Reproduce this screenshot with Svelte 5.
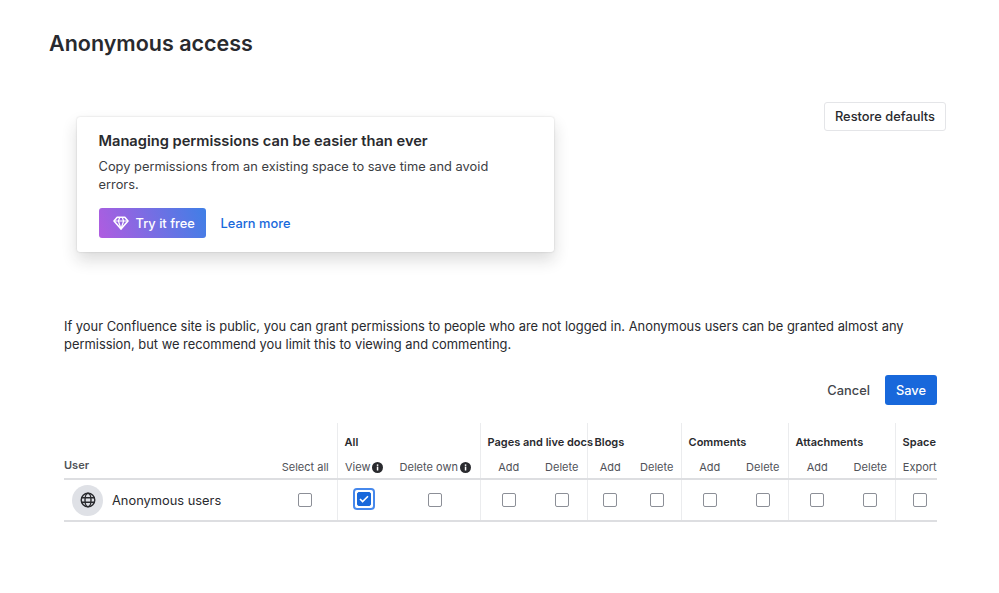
<script lang="ts">
  interface Group {
    name: string;
    perms: { label: string; info?: boolean; checked?: boolean; focus?: boolean }[];
  }

  const groups: Group[] = [
    {
      name: "All",
      perms: [
        { label: "View", info: true, checked: true, focus: true },
        { label: "Delete own", info: true },
      ],
    },
    { name: "Pages and live docs", perms: [{ label: "Add" }, { label: "Delete" }] },
    { name: "Blogs", perms: [{ label: "Add" }, { label: "Delete" }] },
    { name: "Comments", perms: [{ label: "Add" }, { label: "Delete" }] },
    { name: "Attachments", perms: [{ label: "Add" }, { label: "Delete" }] },
    { name: "Space", perms: [{ label: "Export" }] },
  ];

  const widths = [210, 63, 54, 89, 57, 50, 46, 48, 57, 50, 58, 49, 42];
</script>

<main class="page">
  <h1>Anonymous access</h1>

  <div class="top">
    <section class="promo">
      <h2>Managing permissions can be easier than ever</h2>
      <p>Copy permissions from an existing space to save time and avoid errors.</p>
      <div class="promo-actions">
        <button class="try">
          <svg width="16" height="16" viewBox="0 0 16 16" fill="none" stroke="#fff" stroke-width="1.6" stroke-linejoin="round">
            <path d="M4.2 2.2h7.6L15 6 8 14 1 6z" />
            <path d="M1 6h14M5.4 6 8 14l2.6-8M5.4 6 6.8 2.2M10.6 6 9.2 2.2" stroke-width="1.2" />
          </svg>
          Try it free
        </button>
        <span class="link">Learn more</span>
      </div>
    </section>
    <button class="restore">Restore defaults</button>
  </div>

  <div class="content">
    <p class="intro">
      If your Confluence site is public, you can grant permissions to people who are not logged in. Anonymous users can be granted almost any permission, but we recommend you limit this to viewing and commenting.
    </p>

    <div class="actions">
      <span class="cancel">Cancel</span>
      <button class="save">Save</button>
    </div>

    <table>
      <colgroup>
        {#each widths as w}<col style="width: {w}px" />{/each}
      </colgroup>
      <thead>
        <tr class="groups">
          <th class="user" rowspan="2">User</th>
          <th></th>
          {#each groups as g}
            <th class="group" colspan={g.perms.length}>{g.name}</th>
          {/each}
        </tr>
        <tr class="perms">
          <th class="perm">Select all</th>
          {#each groups as g}
            {#each g.perms as p, i}
              <th class="perm" class:start={i === 0} class:last={g.name === "Space"}>
                <span class="perm-label">
                  {p.label}
                  {#if p.info}
                    <svg width="11" height="11" viewBox="0 0 11 11">
                      <circle cx="5.5" cy="5.5" r="5.5" fill="#292a2e" />
                      <rect x="4.8" y="4.6" width="1.5" height="3.9" fill="#fff" />
                      <rect x="4.8" y="2.4" width="1.5" height="1.5" fill="#fff" />
                    </svg>
                  {/if}
                </span>
              </th>
            {/each}
          {/each}
        </tr>
      </thead>
      <tbody>
        <tr>
          <td>
            <div class="who">
              <span class="avatar">
                <svg width="16" height="16" viewBox="0 0 16 16" fill="none" stroke="#292a2e" stroke-width="1.4">
                  <circle cx="8" cy="8" r="6.8" />
                  <ellipse cx="8" cy="8" rx="3" ry="6.8" />
                  <path d="M1.2 5.7h13.6M1.2 10.3h13.6" />
                </svg>
              </span>
              Anonymous users
            </div>
          </td>
          <td class="cell"><span class="box"></span></td>
          {#each groups as g}
            {#each g.perms as p, i}
              <td class="cell" class:start={i === 0} class:last={g.name === "Space"}>
                {#if p.checked}
                  <span class="focus">
                    <span class="box on">
                      <svg width="10" height="8" viewBox="0 0 10 8" fill="none" stroke="#fff" stroke-width="1.6">
                        <path d="M1 4l2.6 2.6L9 1.2" />
                      </svg>
                    </span>
                  </span>
                {:else}
                  <span class="box"></span>
                {/if}
              </td>
            {/each}
          {/each}
        </tr>
      </tbody>
    </table>
  </div>
</main>

<style>
  :global(body) {
    margin: 0;
    background: #fff;
    color: #292a2e;
    font-family: Inter, "Liberation Sans", sans-serif;
  }
  .page {
    padding: 29px 53px 0 49px;
  }
  h1 {
    margin: 0;
    font-size: 21.5px;
    line-height: 28px;
    font-weight: 600;
  }
  .top {
    display: flex;
    justify-content: space-between;
    align-items: flex-start;
    margin-top: 45px;
  }
  .promo {
    width: 477px;
    height: 135px;
    box-sizing: border-box;
    margin: 15px 0 0 28px;
    padding: 14px 22px 14px 21.5px;
    border-radius: 3px;
    background: #fff;
    box-shadow: 0 8px 16px rgba(30, 31, 33, 0.16), 0 0 2px rgba(30, 31, 33, 0.2);
  }
  h2 {
    margin: 0;
    font-size: 14.65px;
    line-height: 20px;
    font-weight: 600;
  }
  .promo p {
    margin: 7px 0 0;
    font-size: 12.85px;
    line-height: 18px;
    color: #3b3d42;
  }
  .promo-actions {
    display: flex;
    align-items: center;
    gap: 15px;
    margin-top: 14px;
  }
  button {
    font-family: inherit;
    font-size: 12.85px;
    font-weight: 500;
    border: 0;
  }
  .try {
    display: flex;
    align-items: center;
    gap: 7px;
    width: 107px;
    height: 30px;
    padding: 0 0 0 14px;
    border-radius: 3px;
    color: #fff;
    background: linear-gradient(70deg, #b05ce0, #3f7fe6);
  }
  .link {
    font-size: 12.85px;
    font-weight: 500;
    color: #1868db;
  }
  .restore {
    width: 122px;
    height: 29px;
    padding: 0;
    border: 1px solid #e4e5e8;
    border-radius: 3px;
    background: #fff;
    color: #292a2e;
  }
  .content {
    width: 873px;
    margin: 66px 0 0 15px;
  }
  .intro {
    margin: 0;
    font-size: 12.9px;
    line-height: 18px;
    color: #292a2e;
  }
  .actions {
    display: flex;
    justify-content: flex-end;
    align-items: center;
    gap: 15px;
    margin-top: 21px;
    font-size: 12.85px;
  }
  .cancel {
    font-weight: 500;
    color: #44464c;
  }
  .save {
    width: 52px;
    height: 30px;
    padding: 0;
    border-radius: 3px;
    background: #1868db;
    color: #fff;
  }
  table {
    table-layout: fixed;
    width: 873px;
    margin-top: 18px;
    border-collapse: collapse;
    font-size: 11px;
  }
  th {
    padding: 0;
    font-weight: 600;
    text-align: left;
    color: #292a2e;
  }
  .groups th {
    height: 32px;
    vertical-align: top;
    padding-top: 12px;
    box-sizing: border-box;
  }
  .groups th.group {
    padding-left: 7px;
    white-space: nowrap;
    border-left: 1px solid #ebecee;
  }
  .groups th.user {
    vertical-align: bottom;
    padding-bottom: 6px;
    color: #505258;
    border-bottom: 2px solid #dddee1;
  }
  .perms th {
    height: 24px;
    box-sizing: border-box;
    padding-top: 5px;
  }
  th.perm {
    font-weight: 400;
    color: #505258;
    text-align: center;
    vertical-align: top;
    white-space: nowrap;
    border-bottom: 2px solid #dddee1;
  }
  .perm-label {
    display: inline-flex;
    align-items: center;
    gap: 2px;
  }
  .start {
    border-left: 1px solid #ebecee;
  }
  .last {
    padding-left: 7px;
  }
  tbody td {
    height: 42px;
    box-sizing: border-box;
    padding: 0;
    border-bottom: 2px solid #dddee1;
  }
  tbody td.cell {
    padding-bottom: 2px;
  }
  tbody td.last {
    padding-left: 7px;
  }
  .who {
    display: flex;
    align-items: center;
    gap: 9px;
    padding-left: 8px;
    font-size: 12.85px;
    color: #292a2e;
  }
  .avatar {
    display: flex;
    align-items: center;
    justify-content: center;
    width: 31px;
    height: 31px;
    border-radius: 50%;
    background: #dfe1e6;
  }
  .cell {
    text-align: center;
  }
  .box {
    display: inline-flex;
    align-items: center;
    justify-content: center;
    vertical-align: middle;
    width: 12px;
    height: 12px;
    border: 1px solid #8c8f97;
    border-radius: 2px;
    background: #fff;
  }
  .box.on {
    border-color: #1868db;
    background: #1868db;
  }
  .focus {
    display: inline-flex;
    align-items: center;
    justify-content: center;
    vertical-align: middle;
    width: 18px;
    height: 18px;
    border: 2px solid #4688ec;
    border-radius: 4px;
  }
</style>
